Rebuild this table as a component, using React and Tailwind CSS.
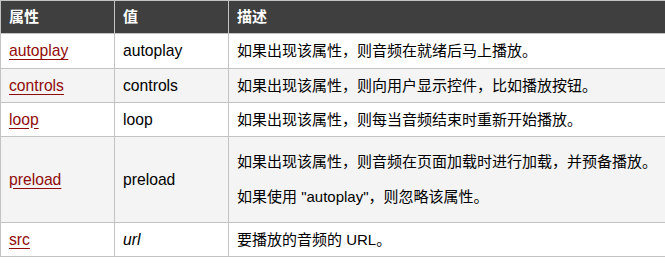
import React from "react";

const font = { fontFamily: '"Liberation Sans", "Noto Sans CJK SC", sans-serif' };

const rows = [
  { attr: "autoplay", value: "autoplay", desc: ["如果出现该属性，则音频在就绪后马上播放。"], bg: "bg-white", h: "h-[35px]" },
  { attr: "controls", value: "controls", desc: ["如果出现该属性，则向用户显示控件，比如播放按钮。"], bg: "bg-[#f4f4f4]", h: "h-[34px]" },
  { attr: "loop", value: "loop", desc: ["如果出现该属性，则每当音频结束时重新开始播放。"], bg: "bg-white", h: "h-[34px]" },
  {
    attr: "preload",
    value: "preload",
    desc: ["如果出现该属性，则音频在页面加载时进行加载，并预备播放。", "如果使用 \"autoplay\"，则忽略该属性。"],
    bg: "bg-[#f4f4f4]",
    h: "h-[86px]",
  },
  { attr: "src", value: "url", italic: true, desc: ["要播放的音频的 URL。"], bg: "bg-white", h: "h-[33px]" },
];

export default function App() {
  return (
    <div className="w-[665px] h-[263px] overflow-hidden bg-white" style={font}>
      <div className="w-[668px] border border-[#c3c3c3] text-[15px] leading-[20px] text-black">
        <div className="flex h-[33px] bg-[#3f3f3f] text-white font-bold border-b border-[#c3c3c3]">
          <div className="w-[113px] pl-[8px] flex items-center">属性</div>
          <div className="w-[114px] pl-[8px] flex items-center border-l border-[#c3c3c3]">值</div>
          <div className="flex-1 pl-[8px] flex items-center border-l border-[#c3c3c3]">描述</div>
        </div>
        {rows.map((r, i) => (
          <div
            key={r.attr}
            className={`flex ${r.h} ${r.bg} ${i < rows.length - 1 ? "border-b border-[#c3c3c3]" : ""}`}
          >
            <div className="w-[113px] pl-[8px] flex items-center text-[15.7px]">
              <a className="text-[#900b09] underline underline-offset-[3px]" href="#">
                {r.attr}
              </a>
            </div>
            <div className="w-[114px] pl-[8px] flex items-center border-l border-[#c3c3c3] text-[15.7px]">
              <span className={r.italic ? "italic" : ""}>{r.value}</span>
            </div>
            <div className="flex-1 pl-[8px] flex flex-col justify-center gap-[15px] border-l border-[#c3c3c3]">
              {r.desc.map((d) => (
                <p key={d}>{d}</p>
              ))}
            </div>
          </div>
        ))}
      </div>
    </div>
  );
}
